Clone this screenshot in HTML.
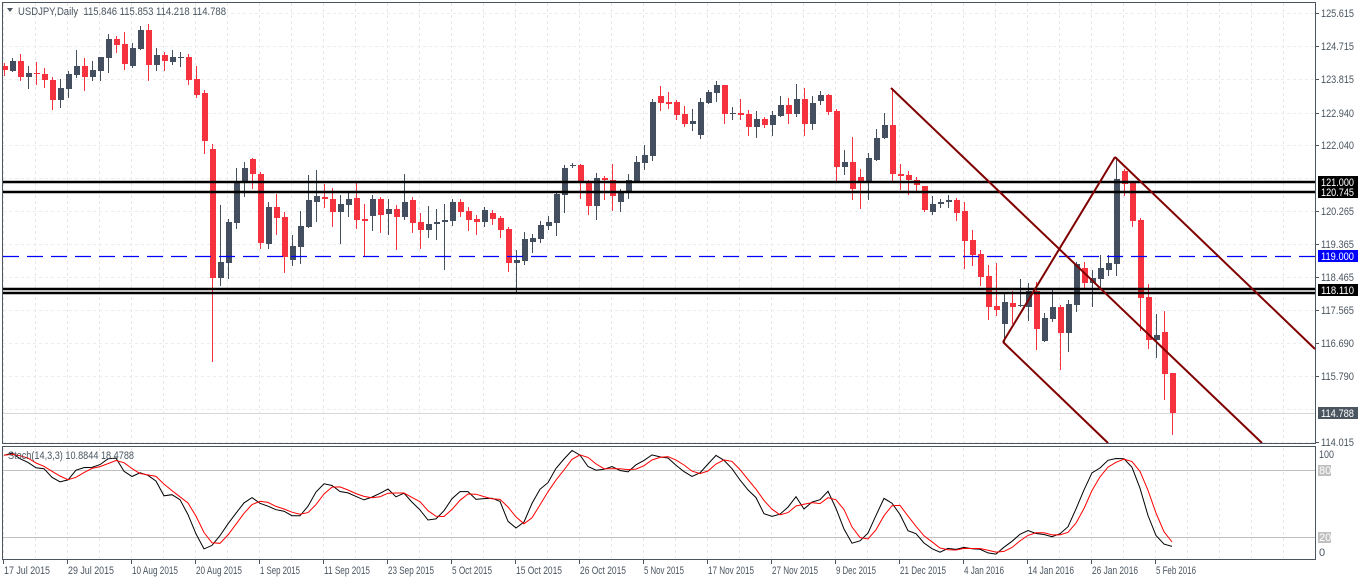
<!DOCTYPE html>
<html><head><meta charset="utf-8">
<style>
html,body{margin:0;padding:0;background:#fff;width:1358px;height:581px;overflow:hidden;}
svg{display:block;font-family:"Liberation Sans",Arial,sans-serif;}
</style></head>
<body>
<svg id="s" width="1358" height="581" xmlns="http://www.w3.org/2000/svg"></svg>
<script>
var D=[
[66,70,63,75,1],[61,71,58,71,0],[61,77,54,80,1],[73,77,66,88,0],[73,74,62,84,1],[74,80,68,87,1],[80,100,77,109,1],[88,100,79,107,0],
[74,89,71,97,0],[66,75,50,77,0],[66,77,58,90,1],[70,77,61,80,0],[57,71,57,80,0],[39,58,34,72,0],[39,45,36,52,1],[44,64,32,69,1],
[48,66,43,67,0],[30,49,26,49,0],[30,65,24,80,1],[55,65,48,70,0],[55,61,52,70,1],[57,62,50,64,0],[57,58,52,66,0],[57,80,54,84,1],
[79,95,66,97,1],[93,141,90,153,1],[149,278,144,361,1],[262,278,205,285,0],[222,263,219,278,0],[182,223,168,228,0],[168,182,162,196,0],[159,174,158,188,1],
[174,243,172,248,1],[207,244,202,248,0],[207,218,194,234,1],[217,257,212,272,1],[246,260,235,265,0],[226,247,211,263,0],[200,227,175,227,0],[196,202,170,221,0],
[197,199,184,207,1],[199,212,188,226,1],[204,212,195,243,0],[199,205,193,216,0],[198,220,182,228,1],[219,221,204,255,1],[199,216,195,230,0],[199,215,197,232,1],
[209,214,199,234,0],[209,217,205,249,1],[202,217,174,219,0],[200,223,197,232,1],[222,230,213,248,1],[224,230,206,237,0],[222,224,209,239,0],[220,222,204,269,0],
[202,221,199,225,0],[202,212,199,216,1],[211,220,207,230,1],[219,222,215,234,1],[210,222,207,226,0],[213,219,210,224,1],[218,230,216,237,1],[229,263,227,271,1],
[260,263,250,293,0],[239,261,232,264,0],[238,242,234,252,0],[225,239,221,242,0],[222,226,216,229,0],[194,223,191,235,0],[168,195,165,212,0],[165,166,163,167,0],
[165,183,164,198,1],[182,206,180,214,1],[178,206,173,219,0],[178,180,176,199,1],[180,196,164,210,1],[192,202,189,211,0],[180,192,174,198,0],[162,182,156,182,0],
[155,163,145,169,0],[102,156,99,160,0],[96,103,86,110,1],[102,104,92,108,1],[102,115,100,119,1],[114,124,106,126,1],[121,124,109,130,0],[102,135,98,138,0],
[92,103,90,103,0],[85,93,81,101,0],[85,114,85,123,1],[113,114,107,119,0],[113,115,99,119,1],[114,127,110,135,1],[119,127,111,137,0],[119,125,117,127,1],
[115,125,111,135,0],[105,116,96,116,0],[105,114,98,123,1],[99,114,84,116,0],[99,124,88,135,1],[103,124,96,129,0],[95,101,91,104,0],[95,112,94,114,1],
[111,167,109,181,1],[162,167,150,174,0],[162,189,137,199,1],[177,182,169,208,1],[158,182,153,199,0],[138,160,129,160,0],[125,138,113,138,0],[125,174,88,181,1],
[174,176,164,189,1],[175,180,171,194,1],[180,185,177,190,1],[186,210,186,211,1],[204,212,196,214,0],[202,204,199,207,0],[200,202,195,207,0],[200,213,198,220,1],
[211,241,202,268,1],[240,255,230,265,1],[254,277,250,285,1],[276,307,265,319,1],[306,310,263,315,1],[302,324,293,343,0],[303,307,291,323,1],[305,306,279,306,0],
[291,307,283,320,0],[291,329,282,349,1],[318,341,313,341,0],[307,319,289,321,0],[307,333,305,369,1],[304,333,300,351,0],[264,305,262,311,0],[268,283,262,288,1],
[278,283,270,306,0],[268,279,255,289,0],[263,270,255,275,0],[179,264,158,275,0],[171,184,169,195,1],[182,221,182,226,1],[220,298,218,330,1],[297,340,284,348,1],
[335,340,314,357,0],[332,374,311,399,1],[373,413,373,434,1]];
var o='';
function L(x1,y1,x2,y2,c,w,extra){o+='<line x1="'+x1+'" y1="'+y1+'" x2="'+x2+'" y2="'+y2+'" stroke="'+c+'" stroke-width="'+(w||1)+'" '+(extra||'')+'/>';}
function T(x,y,t,c,a){o+='<text x="'+x+'" y="'+y+'" font-size="11" fill="'+c+'" '+(a||'')+'>'+t+'</text>';}
for(var gx=3;gx<1315;gx+=32){L(gx+.5,3,gx+.5,443,'#e8e8e8',1,'stroke-dasharray="3,3"');L(gx+.5,448,gx+.5,558,'#e8e8e8',1,'stroke-dasharray="3,3"');}
var ys=[13,46,79,113,145,178,211,244,277,310,343,376,409,442];
ys.forEach(function(y){L(3,y+.5,1315,y+.5,'#ececec',1,'stroke-dasharray="3,3"');});
L(3,413.5,1315,413.5,'#d8d8d8',1);
L(3,470.5,1315,470.5,'#c0c0c0',1);L(3,537.5,1315,537.5,'#c0c0c0',1);
D.forEach(function(d,i){var x=4+8*i;var c=d[4]?'#f6323e':'#434e5e';
L(x+.5,d[2],x+.5,d[3]+1,c,1);
var h=Math.max(1,d[1]-d[0]);o+='<rect x="'+(x-2)+'" y="'+d[0]+'" width="6" height="'+h+'" fill="'+c+'"/>';});
L(3,182,1315,182,'#000',2.5);L(3,192,1315,192,'#000',2.5);L(3,289,1315,289,'#000',2.5);L(3,293,1315,293,'#000',2.5);
L(3,256.5,1315,256.5,'#0000ff',1.3,'stroke-dasharray="16,8"');
var R='#800000';
L(891,88,1262,443,R,2);L(1115,157,1315,349,R,2);L(1003,342,1115,157,R,2);L(1003,342,1108,443,R,2);
var raw=[];
for(var i=0;i<D.length;i++){var s=Math.max(0,i-13),hh=1e9,ll=-1e9;for(var j=s;j<=i;j++){hh=Math.min(hh,D[j][2]);ll=Math.max(ll,D[j][3]);}
if(i<13){ll=Math.max(ll,170);}
var cy=D[i][4]?D[i][1]:D[i][0];raw.push(ll==hh?50:100*(ll-cy)/(ll-hh));}
function sma(a,n){return a.map(function(v,i){var s=0,c=0;for(var j=Math.max(0,i-n+1);j<=i;j++){s+=a[j];c++;}return s/c;});}
var K=sma(raw,3);var Dd=sma(K,3);
function pl(a,c){var p='';a.forEach(function(v,i){p+=(i?'L':'M')+(4+8*i)+','+(559-v*1.11).toFixed(1);});o+='<path d="'+p+'" fill="none" stroke="'+c+'" stroke-width="1"/>';}
pl(K,'#000');pl(Dd,'#ff0000');
o+='<rect x="2.5" y="2.5" width="1313" height="441" fill="none" stroke="#4a5560"/>';
o+='<rect x="2.5" y="446.5" width="1313" height="113" fill="none" stroke="#4a5560"/>';
var TL='textLength="33" lengthAdjust="spacingAndGlyphs"';
var lb=[[13,'125.615'],[46,'124.715'],[79,'123.815'],[113,'122.940'],[145,'122.040'],[211,'120.265'],[244,'119.365'],[277,'118.465'],[310,'117.565'],[343,'116.690'],[376,'115.790'],[442,'114.015']];
lb.forEach(function(l){L(1315,l[0]+.5,1319,l[0]+.5,'#4a5560');T(1321,l[0]+4,l[1],'#4a5560',TL);});
function box(y,t,bg){o+='<rect x="1318" y="'+(y-6)+'" width="40" height="12" fill="'+bg+'"/>';T(1321,y+4,t,'#fff',TL);}
box(182,'121.000','#000');box(192,'120.745','#000');box(256,'119.000','#0000ff');box(290,'118.110','#000');box(413,'114.788','#4a5560');
T(1319,458,'100','#4a5560','textLength="15" lengthAdjust="spacingAndGlyphs"');o+='<rect x="1318" y="465" width="13" height="11" fill="#c0c0c0"/>';T(1319,474,'80','#fff');
o+='<rect x="1318" y="532" width="13" height="11" fill="#c0c0c0"/>';T(1319,541,'20','#fff');T(1319,556,'0','#4a5560');
var dt=['17 Jul 2015','29 Jul 2015','10 Aug 2015','20 Aug 2015','1 Sep 2015','11 Sep 2015','23 Sep 2015','5 Oct 2015','15 Oct 2015','26 Oct 2015','5 Nov 2015','17 Nov 2015','27 Nov 2015','9 Dec 2015','21 Dec 2015','4 Jan 2016','14 Jan 2016','26 Jan 2016','5 Feb 2016'];
dt.forEach(function(t,i){var x=3+64*i;L(x+.5,560,x+.5,564,'#4a5560');var w=t.length==11?46:40;T(x+1,574,t,'#4a5560','textLength="'+w+'" lengthAdjust="spacingAndGlyphs"');});
o+='<path d="M7,8 L13,8 L10,12 Z" fill="#4a5560"/>';
T(18,15,'USDJPY,Daily  115.846 115.853 114.218 114.788','#4a5560','xml:space="preserve" textLength="208" lengthAdjust="spacingAndGlyphs"');
T(8,459,'Stoch(14,3,3) 10.8844 18.4788','#4a5560','textLength="126" lengthAdjust="spacingAndGlyphs"');
document.getElementById('s').innerHTML=o;
</script>
</body></html>
